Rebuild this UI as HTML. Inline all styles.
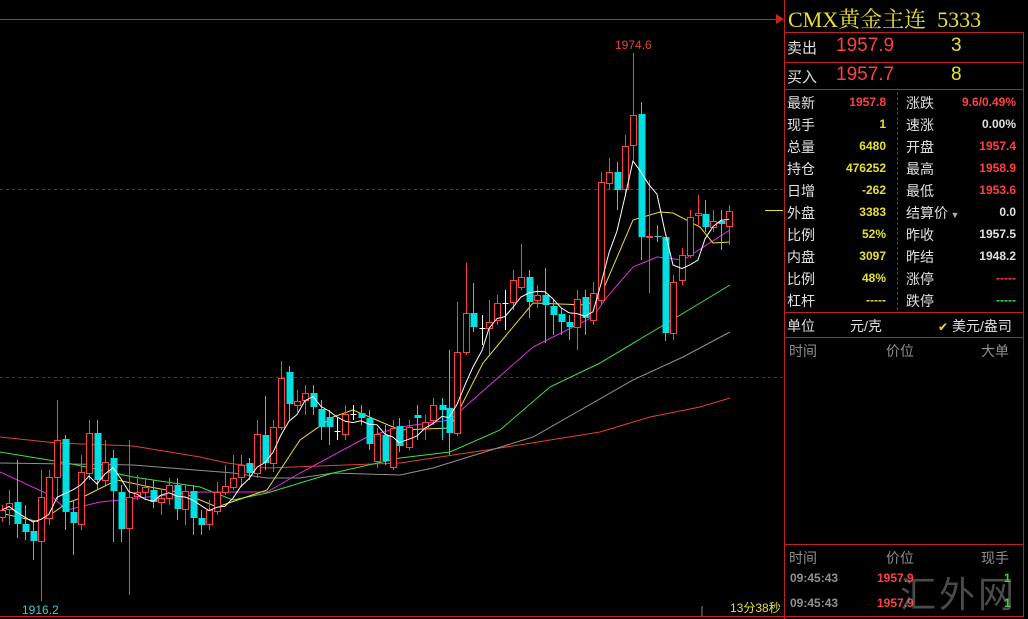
<!DOCTYPE html>
<html><head><meta charset="utf-8"><style>
*{margin:0;padding:0;box-sizing:border-box}
body{width:1028px;height:619px;background:#000;overflow:hidden;position:relative;font-family:"Liberation Sans","Noto Sans CJK SC",sans-serif}
.p{position:absolute;white-space:nowrap}
.lbl{color:#e0e0e0;font-size:14px}
.v{font-size:12px;font-weight:bold;text-align:right}
.y{color:#e8e030}.r{color:#ff4040}.w{color:#e0e0e0}.g{color:#30e030}.gr{color:#909090}
</style></head><body>
<svg id="c" width="784" height="619" style="position:absolute;left:0;top:0">
<line x1="0" y1="19.5" x2="780" y2="19.5" stroke="#d02020"/>
<polygon points="776,14 784,19 776,24" fill="#d02020"/>
<line x1="0" y1="189.5" x2="784" y2="189.5" stroke="#901818" stroke-dasharray="3,3"/>
<line x1="0" y1="377.5" x2="784" y2="377.5" stroke="#901818" stroke-dasharray="3,3"/>
<line x1="0" y1="616.5" x2="784" y2="616.5" stroke="#c02020"/>
<line x1="765" y1="210.5" x2="783" y2="210.5" stroke="#e8e030"/>
<line x1="702" y1="606" x2="702" y2="616" stroke="#888"/>
<g fill="none" stroke-width="1">
<polyline stroke="#e04030" points="0,437 57,443 133,446 200,457 227,463 267,468 400,463 500,448 600,432 650,417 700,407 730,398"/>
<polyline stroke="#909090" points="0,463 133,465 233,473 267,478 300,478 333,473 400,475 433,468 533,437 633,380 683,357 730,332"/>
<polyline stroke="#40e040" points="0,452 67,463 133,477 200,487 233,500 267,493 333,473 400,458 450,452 500,430 550,387 600,363 667,323 730,285"/>
<polyline stroke="#e030e0" points="0,472 50,495 67,510 100,502 167,495 200,492 267,492 300,473 367,437 400,427 450,420 533,347 593,317 607,297 633,267 657,257 683,260 730,230"/>
<polyline stroke="#e8e030" points="0,513 40,522 67,503 83,497 117,480 150,487 183,493 217,507 267,490 300,440 333,417 353,410 400,430 450,428 483,363 533,303 587,305 600,297 633,220 660,212 673,213 700,227 713,243 730,242"/>
</g>
<g id="k"></g>
<text x="615" y="49" fill="#e04040" font-size="12" font-family="Liberation Sans">1974.6</text>
<text x="22" y="614" fill="#30d0d0" font-size="12" font-family="Liberation Sans">1916.2</text>
<text x="730" y="612" fill="#e8e030" font-size="12" font-family="Liberation Sans,Noto Sans CJK SC">13分38秒</text>
</svg>
<script>
var d=[[2,'r',510,517,505,522],[9,'r',503,509,490,525],[17,'c',502,524,460,538],[25,'c',524,532,505,540],[33,'c',531,541,520,560],[41,'r',497,541,470,601],[49,'r',477,518,470,525],[57,'r',440,477,400,500],[65,'c',439,512,435,530],[73,'c',512,523,500,555],[81,'r',472,524,455,530],[89,'r',433,473,420,480],[97,'c',433,480,420,490],[105,'r',462,480,440,485],[113,'c',458,491,450,542],[121,'c',492,529,485,542],[129,'r',497,528,440,595],[137,'r',492,496,475,500],[145,'r',487,492,478,500],[153,'c',490,502,480,508],[161,'r',498,502,490,515],[169,'r',485,498,478,505],[177,'c',485,509,478,520],[185,'r',491,509,485,525],[193,'c',491,518,485,535],[201,'c',518,525,510,535],[209,'r',510,524,500,530],[217,'r',492,511,482,515],[225,'r',486,492,465,495],[233,'r',478,487,455,490],[241,'r',465,477,455,487],[249,'c',463,473,458,480],[257,'r',434,473,420,478],[265,'c',435,463,396,470],[273,'r',427,463,420,472],[281,'r',378,427,361,430],[289,'c',372,404,366,420],[297,'r',401,405,390,412],[305,'r',393,400,385,415],[313,'c',393,407,385,415],[321,'c',409,427,400,440],[329,'c',417,427,410,445],[337,'w',431,431,418,440],[345,'r',414,434,405,440],[353,'w',414,414,405,420],[361,'c',413,418,405,425],[369,'c',418,444,410,450],[377,'r',434,461,428,468],[385,'c',435,461,425,465],[393,'r',428,467,420,470],[399,'c',426,446,418,452],[409,'r',427,447,420,450],[417,'c',415,418,405,440],[425,'r',422,428,415,440],[433,'r',405,420,398,425],[442,'c',405,410,398,440],[449,'c',408,433,350,455],[457,'r',352,433,302,436],[466,'r',313,352,263,355],[473,'c',313,327,283,332],[482,'w',328,328,315,345],[489,'r',322,328,300,355],[497,'r',303,320,295,325],[505,'w',303,303,290,330],[513,'r',280,302,270,310],[521,'r',277,287,244,290],[529,'c',277,302,270,318],[537,'r',295,300,285,308],[545,'c',295,305,268,343],[553,'c',306,315,300,335],[561,'c',314,322,308,335],[569,'c',322,327,315,340],[577,'r',299,327,290,350],[585,'c',297,318,290,335],[593,'r',293,320,282,325],[601,'r',182,300,172,305],[609,'r',172,183,158,190],[617,'c',172,190,162,210],[625,'r',146,189,135,195],[633,'r',115,145,53,160],[641,'c',114,237,102,260],[649,'r',236,237,180,293],[657,'c',236,237,225,242],[665,'c',237,333,237,341],[673,'r',282,333,275,340],[682,'r',255,280,248,285],[690,'r',217,255,210,258],[698,'r',213,215,195,225],[705,'c',214,227,200,232],[713,'r',221,227,210,232],[721,'c',221,224,210,250],[729,'r',211,226,205,245]];
var s='';d.forEach(function(a){var x=a[0],t=a[1],c=t=='r'?'#ff4040':t=='c'?'#00e0e0':'#ffffff';
s+='<line x1="'+(x+.5)+'" y1="'+a[4]+'" x2="'+(x+.5)+'" y2="'+a[5]+'" stroke="'+c+'"/>';
var h=Math.max(1,a[3]-a[2]);
if(t=='r')s+='<rect x="'+(x-2.5)+'" y="'+(a[2]+.5)+'" width="6" height="'+h+'" fill="#000" stroke="'+c+'"/>';
else if(t=='c')s+='<rect x="'+(x-2.5)+'" y="'+a[2]+'" width="7" height="'+h+'" fill="'+c+'"/>';
else s+='<line x1="'+(x-2.5)+'" y1="'+(a[2]+.5)+'" x2="'+(x+3.5)+'" y2="'+(a[2]+.5)+'" stroke="#fff"/>';});
var cl=d.map(function(a){return a[1]=='c'?a[3]:a[2]});var pts=[];
for(var i=0;i<d.length;i++){var n=0,m=0;for(var j=Math.max(0,i-4);j<=i;j++){n+=cl[j];m++}pts.push(d[i][0]+','+(n/m).toFixed(1))}
s+='<polyline fill="none" stroke="#fff" points="'+pts.join(' ')+'"/>';
document.getElementById('k').innerHTML=s;
</script>
<div style="position:absolute;left:784px;top:0;width:1px;height:619px;background:#c02020"></div>
<div style="position:absolute;left:784px;top:32px;width:240px;height:585px;border:1px solid #c02020"></div>
<div style="position:absolute;left:784px;top:62px;width:240px;height:1px;background:#c02020"></div>
<div style="position:absolute;left:784px;top:89px;width:240px;height:1px;background:#c02020"></div>
<div style="position:absolute;left:784px;top:312px;width:240px;height:1px;background:#c02020"></div>
<div style="position:absolute;left:784px;top:337px;width:240px;height:1px;background:#c02020"></div>
<div style="position:absolute;left:784px;top:544px;width:240px;height:1px;background:#c02020"></div>
<div style="position:absolute;left:897px;top:92px;width:0;height:218px;border-left:1px dashed #902020"></div>
<div class="p y" style="left:788px;top:3px;font-size:22px;font-family:'Liberation Serif','Noto Serif CJK SC',serif">CMX黄金主连&nbsp;&nbsp;5333</div>
<div class="p lbl" style="left:787px;top:37px;font-size:15px">卖出</div>
<div class="p r" style="left:836px;top:35px;font-size:19px">1957.9</div>
<div class="p y" style="left:951px;top:35px;font-size:19px">3</div>
<div class="p lbl" style="left:787px;top:66px;font-size:15px">买入</div>
<div class="p r" style="left:836px;top:64px;font-size:19px">1957.7</div>
<div class="p y" style="left:951px;top:64px;font-size:19px">8</div>
<div id="t"></div>
<script>
var L=[['最新','1957.8','r','涨跌','9.6/0.49%','r'],['现手','1','y','速涨','0.00%','w'],['总量','6480','y','开盘','1957.4','r'],['持仓','476252','y','最高','1958.9','r'],['日增','-262','y','最低','1953.6','r'],['外盘','3383','y','结算价','0.0','w'],['比例','52%','y','昨收','1957.5','w'],['内盘','3097','y','昨结','1948.2','w'],['比例','48%','y','涨停','-----','r'],['杠杆','-----','y','跌停','-----','g']];
var h='';L.forEach(function(r,i){var t=93+i*22;
h+='<div class="p lbl" style="left:787px;top:'+t+'px">'+r[0]+'</div><div class="p v '+r[2]+'" style="left:826px;width:60px;top:'+(t+2)+'px">'+r[1]+'</div><div class="p lbl" style="left:906px;top:'+t+'px">'+r[3]+(i==5?'<span style="font-size:9px;color:#aaa"> ▼</span>':'')+'</div><div class="p v '+r[5]+'" style="left:946px;width:70px;top:'+(t+2)+'px">'+r[4]+'</div>';});
document.getElementById('t').innerHTML=h;
</script>
<div class="p lbl" style="left:787px;top:316px">单位</div>
<div class="p lbl" style="left:850px;top:316px">元/克</div>
<div class="p lbl" style="left:938px;top:316px"><span class="y" style="font-size:12px">✔</span> 美元/盎司</div>
<div class="p gr" style="left:789px;top:341px;font-size:14px">时间</div>
<div class="p gr" style="left:886px;top:341px;font-size:14px">价位</div>
<div class="p gr" style="left:981px;top:341px;font-size:14px">大单</div>
<div class="p gr" style="left:789px;top:548px;font-size:14px">时间</div>
<div class="p gr" style="left:886px;top:548px;font-size:14px">价位</div>
<div class="p gr" style="left:981px;top:548px;font-size:14px">现手</div>
<div class="p gr" style="left:790px;top:571px;font-size:12px;font-weight:bold">09:45:43</div>
<div class="p r" style="left:877px;top:571px;font-size:12px;font-weight:bold">1957.9</div>
<div class="p g" style="left:1004px;top:571px;font-size:12px;font-weight:bold">1</div>
<div class="p gr" style="left:790px;top:596px;font-size:12px;font-weight:bold">09:45:43</div>
<div class="p r" style="left:877px;top:596px;font-size:12px;font-weight:bold">1957.9</div>
<div class="p g" style="left:1004px;top:596px;font-size:12px;font-weight:bold">1</div>
<div class="p" style="left:900px;top:566px;font-size:36px;color:rgba(150,150,150,0.5);letter-spacing:3px">汇外网</div>
</body></html>
